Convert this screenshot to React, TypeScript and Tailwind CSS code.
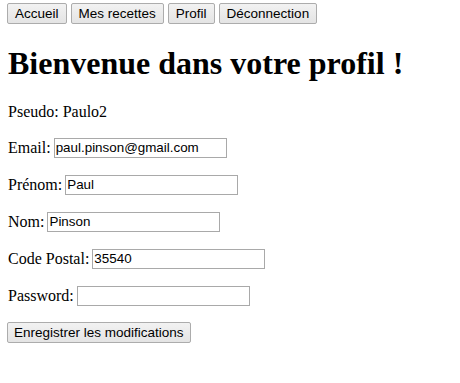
import React from "react";

const btn =
  "h-[21px] border border-[#acacac] rounded-[2px] bg-gradient-to-b from-[#f2f2f2] to-[#e4e4e4] text-[13.5px] leading-none text-black font-['Liberation_Sans',Arial,sans-serif]";

const field =
  "h-[20px] w-[173px] border border-[#a9a9a9] bg-white px-[1px] text-[13.4px] text-black font-['Liberation_Sans',Arial,sans-serif] outline-none";

function Row({ label, value, type = "text" }: { label: string; value: string; type?: string }) {
  return (
    <div className="flex items-center h-[21px] mb-[16px]">
      <span className="mr-[3px]">{label}</span>
      <input type={type} defaultValue={value} className={field} />
    </div>
  );
}

export default function App() {
  return (
    <div className="min-h-[383px] w-[460px] bg-white text-black font-['Liberation_Serif','Times_New_Roman',serif] text-[16px] leading-[18px]">
      <nav className="flex gap-[4px] pl-[7px] pt-[3px]">
        <button className={btn + " px-[7px]"}>Accueil</button>
        <button className={btn + " px-[7px]"}>Mes recettes</button>
        <button className={btn + " px-[7px]"}>Profil</button>
        <button className={btn + " px-[7px]"}>Déconnection</button>
      </nav>

      <div className="pl-[8px]">
        <h1 className="text-[32px] font-bold leading-[37px] mt-[21px] mb-[21px]">
          Bienvenue dans votre profil !
        </h1>

        <p className="mb-[16px]">Pseudo: Paulo2</p>

        <Row label="Email:" value="paul.pinson@gmail.com" />
        <Row label="Prénom:" value="Paul" />
        <Row label="Nom:" value="Pinson" />
        <Row label="Code Postal:" value="35540" />
        <Row label="Password:" value="" type="password" />

        <button className={btn + " px-[6px] -ml-px"}>Enregistrer les modifications</button>
      </div>
    </div>
  );
}
